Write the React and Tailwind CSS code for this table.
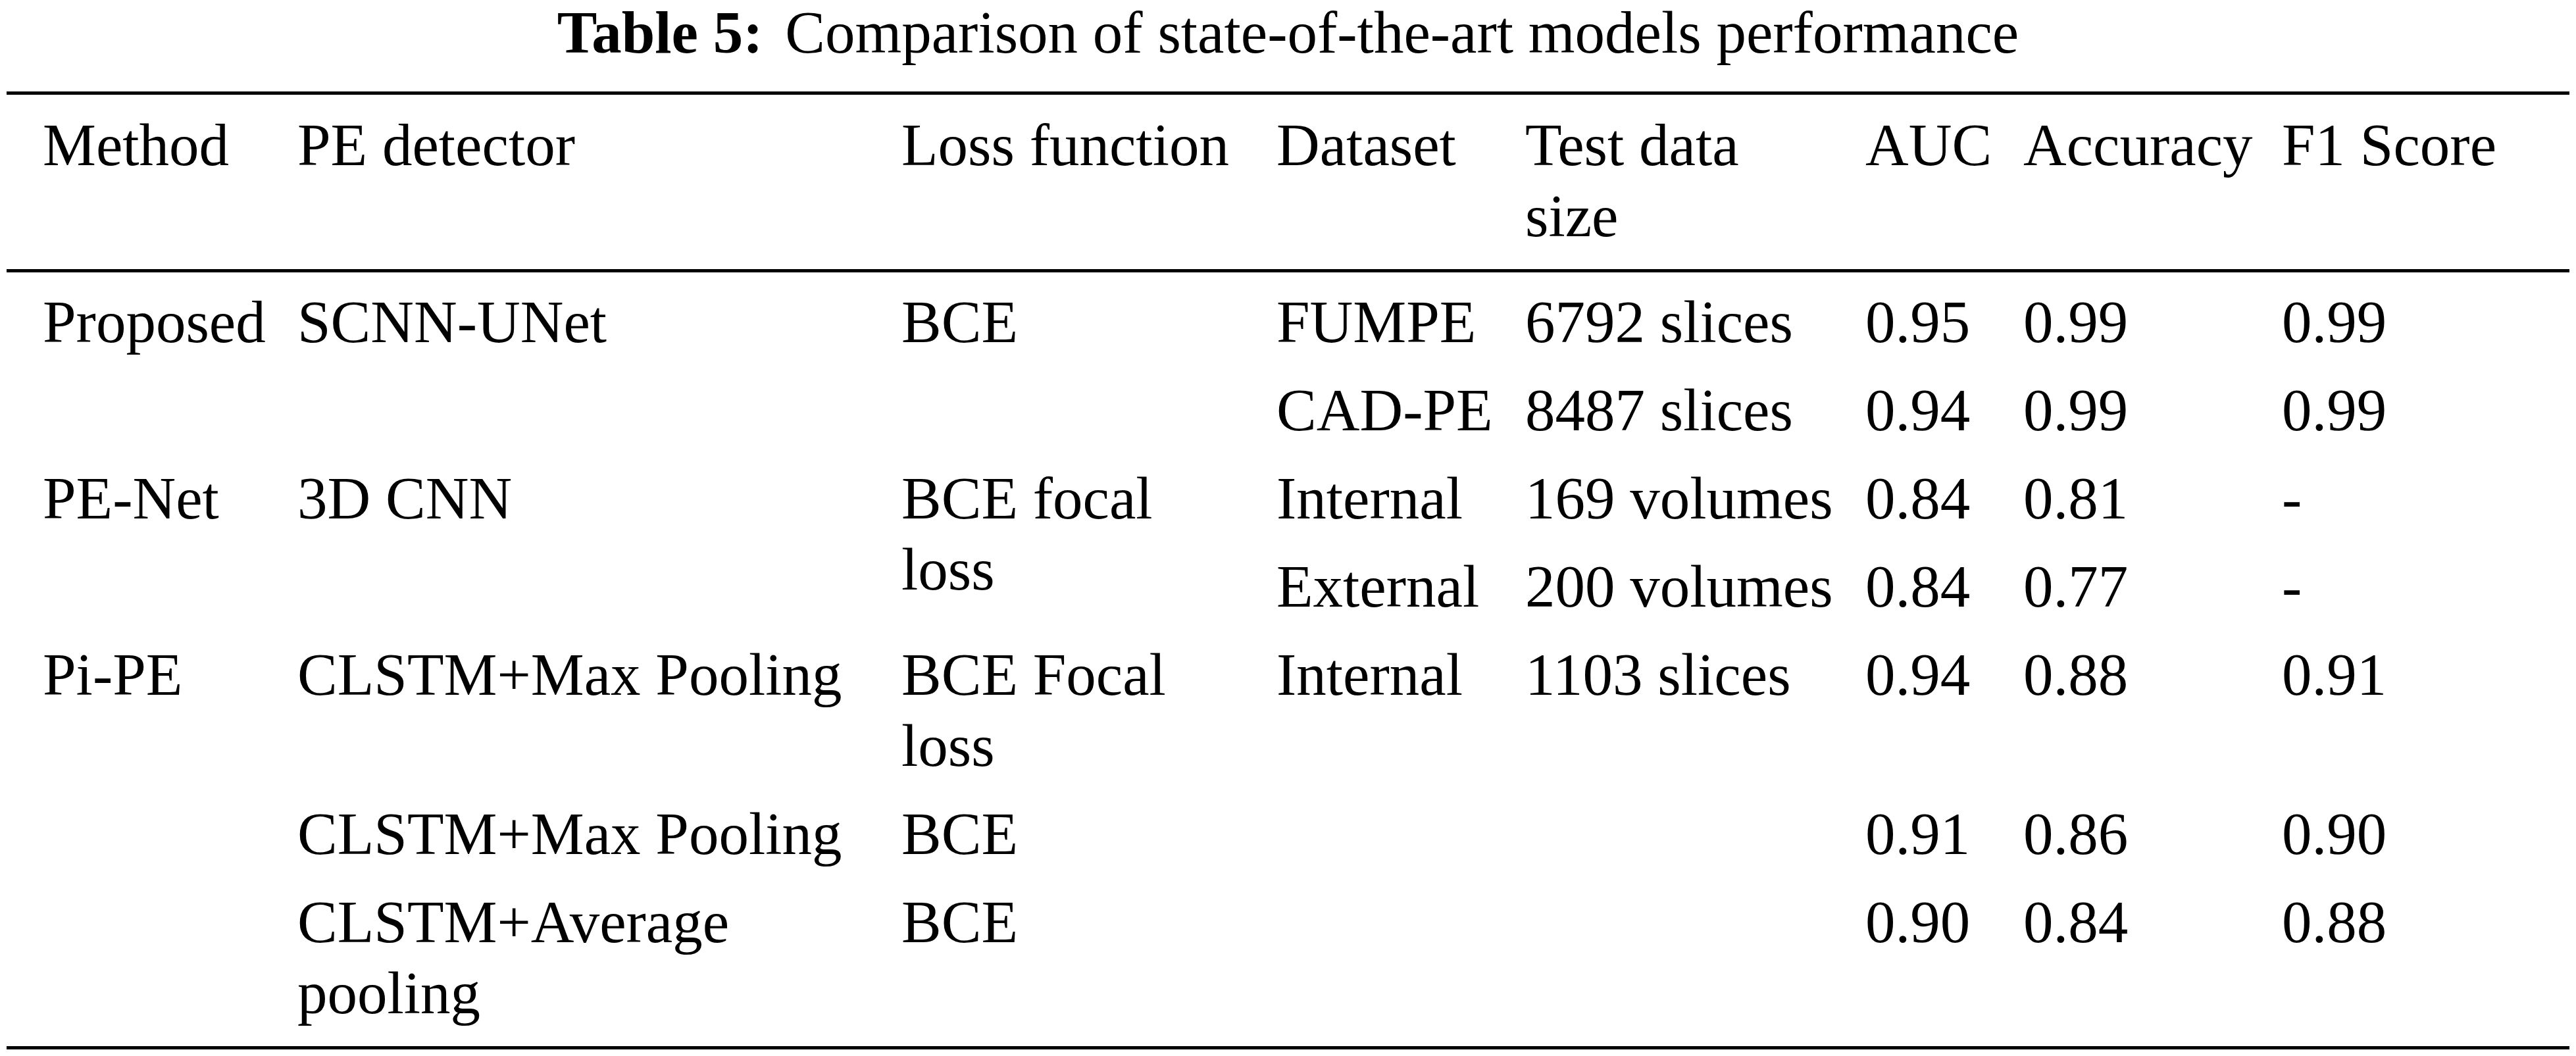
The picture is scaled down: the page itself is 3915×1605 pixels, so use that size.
import * as React from "react";

const COLS =
  "grid grid-cols-[387px_918px_570px_378px_517px_240px_393px_1fr] pl-[55px]";

const HEAD = [
  "Method",
  "PE detector",
  "Loss function",
  "Dataset",
  ["Test data", "size"],
  "AUC",
  "Accuracy",
  "F1 Score",
];

// span: cell covers two body rows (multirow in the source table)
const ROWS = [
  [
    { t: "Proposed", span: true },
    { t: "SCNN-UNet", span: true },
    { t: "BCE", span: true },
    "FUMPE",
    "6792 slices",
    "0.95",
    "0.99",
    "0.99",
  ],
  [null, null, null, "CAD-PE", "8487 slices", "0.94", "0.99", "0.99"],
  [
    { t: "PE-Net", span: true },
    { t: "3D CNN", span: true },
    { t: ["BCE focal", "loss"], span: true },
    "Internal",
    "169 volumes",
    "0.84",
    "0.81",
    "-",
  ],
  [null, null, null, "External", "200 volumes", "0.84", "0.77", "-"],
  [
    "Pi-PE",
    "CLSTM+Max Pooling",
    ["BCE Focal", "loss"],
    "Internal",
    "1103 slices",
    "0.94",
    "0.88",
    "0.91",
  ],
  ["", "CLSTM+Max Pooling", "BCE", "", "", "0.91", "0.86", "0.90"],
  ["", ["CLSTM+Average", "pooling"], "BCE", "", "", "0.90", "0.84", "0.88"],
];

function Lines({ value }) {
  const lines = Array.isArray(value) ? value : [value];
  return lines.map((l, i) => (
    <div key={i} className="whitespace-nowrap">
      {l}
    </div>
  ));
}

export default function App() {
  return (
    <div className="w-[3915px] h-[1605px] bg-white text-black font-['Liberation_Serif','Times_New_Roman',serif] text-[91px] leading-[108px]">
      <div className="text-center leading-[100px] mb-[39px] whitespace-nowrap">
        <span className="font-bold">Table 5:</span>{" "}
        <span className="ml-[11px]">
          Comparison of state-of-the-art models performance
        </span>
      </div>

      <div className="mx-[10px] border-t-[5px] border-b-[5px] border-black">
        <div className={`${COLS} pt-[23px] pb-[26px] border-b-[5px] border-black`}>
          {HEAD.map((h, i) => (
            <div key={i}>
              <Lines value={h} />
            </div>
          ))}
        </div>

        <div className={`${COLS} pt-[10px] pb-[12px]`}>
          {ROWS.map((row, r) =>
            row.map((cell, c) => {
              if (cell === null) return null;
              const isObj = cell && typeof cell === "object" && !Array.isArray(cell);
              const value = isObj ? cell.t : cell;
              return (
                <div
                  key={`${r}-${c}`}
                  className={`pt-[12px] pb-[14px] ${isObj && cell.span ? "row-span-2" : ""}`}
                  style={{ gridColumnStart: c + 1 }}
                >
                  <Lines value={value} />
                </div>
              );
            })
          )}
        </div>
      </div>
    </div>
  );
}
